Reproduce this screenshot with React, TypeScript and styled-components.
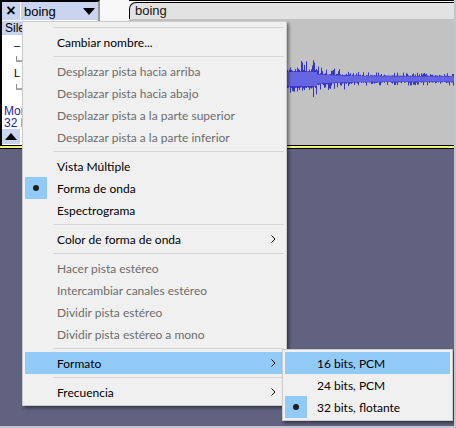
import React, { useMemo } from 'react';
import styled, { createGlobalStyle } from 'styled-components';

const GlobalStyle = createGlobalStyle`
  html, body {
    margin: 0;
    padding: 0;
    background: #616180;
  }
  * { box-sizing: border-box; }
`;

const Screen = styled.div`
  position: relative;
  width: 456px;
  height: 428px;
  overflow: hidden;
  background: #616180;
  border-right: 2px solid #c4c4cc;
  border-bottom: 2px solid #c4c4cc;
  font-family: "Liberation Sans", Arial, sans-serif;
`;

const TrackRow = styled.div`
  display: flex;
  height: 145px;
`;

const TrackDivider = styled.div`
  height: 4px;
  border-top: 1px solid #000;
  border-bottom: 1px solid #000;
  background: #f2f27a;
`;

const TrackInfo = styled.div`
  width: 100px;
  display: flex;
  flex-direction: column;
  background: #fff;
  border-left: 2px solid #000;
  border-top: 2px solid #000;
  border-right: 2px solid #9a9a9a;
`;

const TitleRow = styled.div`
  display: flex;
  gap: 1px;
  height: 18px;
`;

const PanelButton = styled.div<{ $width?: number }>`
  ${p => (p.$width ? `width: ${p.$width}px;` : 'flex: 1;')}
  display: flex;
  align-items: center;
  background: #c9d4ef;
  color: #000;
  font-size: 12px;
  white-space: nowrap;
  overflow: hidden;
`;

const CloseGlyph = styled.span`
  width: 100%;
  text-align: center;
  font-size: 16px;
  font-weight: bold;
  line-height: 18px;
`;

const NameText = styled.span`
  flex: 1;
  padding-left: 3px;
  font-size: 13px;
`;

const MuteRow = styled.div`
  display: flex;
  gap: 2px;
  height: 16px;
  margin-top: 1px;
`;

const ButtonText = styled.span`
  padding-left: 3px;
`;

const SliderBlock = styled.div`
  display: flex;
  flex-direction: column;
  padding: 2px 4px 0 10px;
  height: 30px;
  margin-top: 2px;
`;

const SliderLabels = styled.div`
  display: flex;
  justify-content: space-between;
  font-size: 11px;
  line-height: 12px;
  padding-left: 2px;
`;

const SliderTrack = styled.div`
  margin-top: 5px;
  margin-left: 4px;
  height: 6px;
  border-left: 1px solid #8a8a8a;
  border-right: 1px solid #8a8a8a;
  border-bottom: 2px solid #a8a8a8;
  width: 70px;
`;

const InfoText = styled.div`
  font-size: 12px;
  line-height: 12px;
  color: #1f1f9a;
  padding-left: 2px;
  white-space: nowrap;
`;

const InfoBlock = styled.div`
  margin-top: 14px;
`;

const CollapseRow = styled.div`
  margin-top: auto;
  margin-bottom: 1px;
  display: flex;
  height: 17px;
`;

const Ruler = styled.div`
  width: 29px;
  background: #fafafa;
  border-top: 20px solid #f8f8f8;
`;

const Clip = styled.div`
  flex: 1;
  display: flex;
  flex-direction: column;
  border-top: 1px solid #000;
  padding-top: 1px;
  background: #f4f4f4;
`;

const ClipTitle = styled.div`
  height: 17px;
  border-top: 1px solid #000;
  border-left: 1px solid #000;
  border-top-left-radius: 7px;
  background: #e2e2e2;
  font-size: 13px;
  line-height: 16px;
  padding-left: 5px;
  color: #161616;
`;

const WaveArea = styled.div`
  flex: 1;
  background: #c2c2c2;
  overflow: hidden;
`;

const Menu = styled.div<{ $left: number; $top: number; $width: number }>`
  position: absolute;
  left: ${p => p.$left}px;
  top: ${p => p.$top}px;
  width: ${p => p.$width}px;
  padding: 2px;
  background: #f0f0f0;
  border: 1px solid #cccccc;
  box-shadow: 2px 2px 3px rgba(0, 0, 0, 0.45);
  font-family: "Segoe UI", Lato, "Noto Sans", sans-serif;
  font-size: 12px;
`;

const MenuItem = styled.div<{ $highlighted?: boolean; $disabled?: boolean }>`
  display: flex;
  align-items: center;
  height: 22px;
  background: ${p => (p.$highlighted ? '#91c9f7' : 'transparent')};
  color: ${p => (p.$disabled ? '#6d6d6d' : '#000')};
`;

const CheckCell = styled.div<{ $checked?: boolean }>`
  width: 22px;
  height: 22px;
  display: flex;
  align-items: center;
  justify-content: center;
  background: ${p => (p.$checked ? '#91c9f7' : 'transparent')};
`;

const Bullet = styled.span`
  width: 6px;
  height: 6px;
  border-radius: 50%;
  background: #1e1e1e;
`;

const ItemLabel = styled.span`
  flex: 1;
  padding-left: 10px;
  white-space: nowrap;
`;

const ArrowCell = styled.div`
  width: 22px;
  display: flex;
  align-items: center;
  justify-content: center;
`;

const Separator = styled.div`
  height: 7px;
  display: flex;
  align-items: center;
  padding-left: 28px;

  &::after {
    content: '';
    flex: 1;
    height: 1px;
    background: #d7d7d7;
  }
`;

type Entry =
  | { sep: true }
  | { label: string; disabled?: boolean; checked?: boolean; highlighted?: boolean; sub?: boolean };

const mainMenu: Entry[] = [
  { sep: true },
  { label: 'Cambiar nombre...' },
  { sep: true },
  { label: 'Desplazar pista hacia arriba', disabled: true },
  { label: 'Desplazar pista hacia abajo', disabled: true },
  { label: 'Desplazar pista a la parte superior', disabled: true },
  { label: 'Desplazar pista a la parte inferior', disabled: true },
  { sep: true },
  { label: 'Vista Múltiple' },
  { label: 'Forma de onda', checked: true },
  { label: 'Espectrograma' },
  { sep: true },
  { label: 'Color de forma de onda', sub: true },
  { sep: true },
  { label: 'Hacer pista estéreo', disabled: true },
  { label: 'Intercambiar canales estéreo', disabled: true },
  { label: 'Dividir pista estéreo', disabled: true },
  { label: 'Dividir pista estéreo a mono', disabled: true },
  { sep: true },
  { label: 'Formato', sub: true, highlighted: true },
  { sep: true },
  { label: 'Frecuencia', sub: true },
];

const formatMenu: Entry[] = [
  { label: '16 bits, PCM', highlighted: true },
  { label: '24 bits, PCM' },
  { label: '32 bits, flotante', checked: true },
];

function Chevron() {
  return (
    <svg width="5" height="8" viewBox="0 0 5 8">
      <polyline points="0.5,0.5 4,4 0.5,7.5" fill="none" stroke="#000" strokeWidth="1" />
    </svg>
  );
}

function MenuList({ entries, left, top, width }: { entries: Entry[]; left: number; top: number; width: number }) {
  return (
    <Menu $left={left} $top={top} $width={width}>
      {entries.map((e, i) =>
        'sep' in e ? (
          <Separator key={i} />
        ) : (
          <MenuItem key={i} $highlighted={e.highlighted} $disabled={e.disabled}>
            <CheckCell $checked={e.checked}>{e.checked && <Bullet />}</CheckCell>
            <ItemLabel>{e.label}</ItemLabel>
            <ArrowCell>{e.sub && <Chevron />}</ArrowCell>
          </MenuItem>
        )
      )}
    </Menu>
  );
}

function Waveform() {
  const width = 325;
  const height = 125;
  const mid = 60;
  const paths = useMemo(() => {
    let seed = 12345;
    const rnd = () => {
      seed = (seed * 1103515245 + 12345) & 0x7fffffff;
      return seed / 0x7fffffff;
    };
    let peaks = '';
    let rms = '';
    for (let x = 0; x < width; x++) {
      const px = 129 + x;
      const body = px < 317 ? 10 : 3.5 + 3 * Math.exp(-(px - 317) / 30);
      const spikeMax = px < 317 ? 9 : px < 345 ? 7 : 3.5;
      const up = body * (0.75 + 0.25 * rnd()) + (rnd() > 0.55 ? spikeMax * rnd() : 0);
      const down = body * (0.75 + 0.25 * rnd()) + (rnd() > 0.55 ? spikeMax * rnd() : 0);
      const cx = x + 0.5;
      peaks += `M${cx} ${(mid - up).toFixed(1)}V${(mid + down).toFixed(1)}`;
      const r = body * 0.7;
      rms += `M${cx} ${(mid - r).toFixed(1)}V${(mid + r).toFixed(1)}`;
    }
    return { peaks, rms };
  }, []);
  return (
    <svg width={width} height={height} viewBox={`0 0 ${width} ${height}`}>
      <path d={paths.peaks} stroke="#3535cc" strokeWidth="1" />
      <path d={paths.rms} stroke="#6666e2" strokeWidth="1" />
    </svg>
  );
}

function DownTriangle() {
  return (
    <svg width="12" height="7" viewBox="0 0 12 7" style={{ marginRight: 3 }}>
      <polygon points="0,0 12,0 6,7" fill="#000" />
    </svg>
  );
}

function UpTriangle() {
  return (
    <svg width="12" height="7" viewBox="0 0 12 7" style={{ margin: '0 auto' }}>
      <polygon points="0,7 12,7 6,0" fill="#000" />
    </svg>
  );
}

export default function App() {
  return (
    <>
      <GlobalStyle />
      <Screen>
        <TrackRow>
          <TrackInfo>
            <TitleRow>
              <PanelButton $width={18}>
                <CloseGlyph>×</CloseGlyph>
              </PanelButton>
              <PanelButton>
                <NameText>boing</NameText>
                <DownTriangle />
              </PanelButton>
            </TitleRow>
            <MuteRow>
              <PanelButton>
                <ButtonText>Silencio</ButtonText>
              </PanelButton>
              <PanelButton>
                <ButtonText>Solo</ButtonText>
              </PanelButton>
            </MuteRow>
            <SliderBlock>
              <SliderLabels>
                <span>–</span>
                <span>+</span>
              </SliderLabels>
              <SliderTrack />
            </SliderBlock>
            <SliderBlock>
              <SliderLabels>
                <span>L</span>
                <span>R</span>
              </SliderLabels>
              <SliderTrack />
            </SliderBlock>
            <InfoBlock>
              <InfoText>Mono, 44100Hz</InfoText>
              <InfoText>32 bits flotante</InfoText>
            </InfoBlock>
            <CollapseRow>
              <PanelButton $width={18}>
                <UpTriangle />
              </PanelButton>
            </CollapseRow>
          </TrackInfo>
          <Ruler />
          <Clip>
            <ClipTitle>boing</ClipTitle>
            <WaveArea>
              <Waveform />
            </WaveArea>
          </Clip>
        </TrackRow>
        <TrackDivider />
        <MenuList entries={mainMenu} left={22} top={21} width={265} />
        <MenuList entries={formatMenu} left={282} top={349} width={171} />
      </Screen>
    </>
  );
}
